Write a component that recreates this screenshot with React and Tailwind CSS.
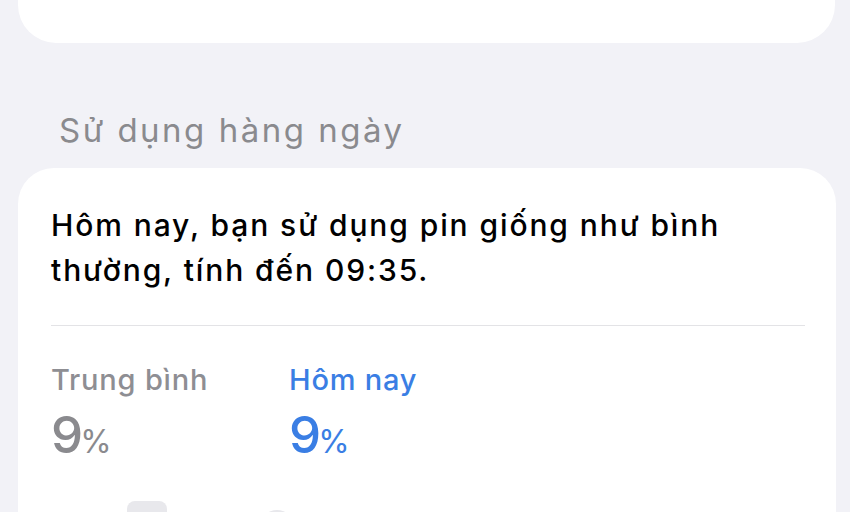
export default function App() {
  const font = { fontFamily: 'Inter, "Noto Sans", "Liberation Sans", sans-serif' };
  return (
    <div className="w-[850px] h-[512px] overflow-hidden bg-[#f2f2f7]" style={font}>
      <div className="ml-[18px] mr-[15px] h-[43px] rounded-b-[38px] bg-white" />
      <div className="mt-[67px] pl-[59px] text-[33px] leading-[40px] tracking-[2.5px] text-[#8a8a8e]">
        Sử dụng hàng ngày
      </div>
      <div className="mt-[18px] ml-[18px] mr-[14px] h-[400px] rounded-[36px] bg-white pl-[33px] pr-[31px] pt-[35px]">
        <p className="text-[30px] leading-[45px] font-medium text-black tracking-[1.9px]">
          Hôm nay, bạn sử dụng pin giống như bình thường, tính đến 09:35.
        </p>
        <div className="mt-[32px] h-px bg-[#e3e3e6]" />
        <div className="mt-[36px] flex">
          <div className="w-[238px]">
            <div className="text-[29px] leading-[36px] font-medium tracking-[0.8px] text-[#8e8e93]">Trung bình</div>
            <div className="mt-[11px] h-[52px] text-[51px] leading-[52px] font-medium text-[#8a8a8e]">
              9<span className="ml-[-3px] text-[32px] font-normal">%</span>
            </div>
          </div>
          <div>
            <div className="text-[29px] leading-[36px] font-medium tracking-[0.8px] text-[#3a7ee4]">Hôm nay</div>
            <div className="mt-[11px] h-[52px] text-[51px] leading-[52px] font-medium text-[#3a7ee4]">
              9<span className="ml-[-3px] text-[32px] font-normal">%</span>
            </div>
          </div>
        </div>
        <div className="mt-[40px] flex items-start">
          <div className="ml-[76px] w-[40px] h-[30px] rounded-[8px] bg-[#e8e8ec]" />
          <div className="ml-[93px] mt-[9px] w-[34px] h-[20px] rounded-t-full bg-[#e8e8ec]" />
        </div>
      </div>
    </div>
  );
}
